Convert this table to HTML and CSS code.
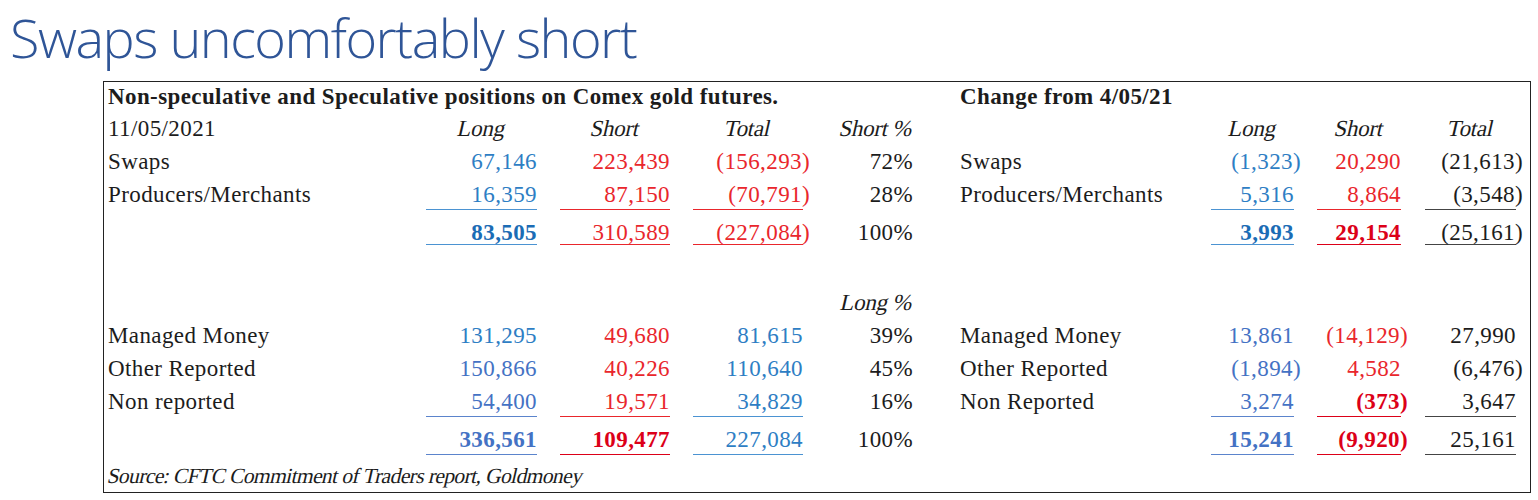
FILE: index.html
```html
<!DOCTYPE html>
<html lang="en">
<head>
<meta charset="utf-8">
<title>Swaps uncomfortably short</title>
<link rel="stylesheet" href="styles.css">
</head>
<body>
<h1 class="title">Swaps uncomfortably short</h1>
<div class="table">
  <div class="row row-title">
    <div class="cell bold span-left">Non-speculative and Speculative positions on Comex gold futures.</div>
    <div class="cell bold c-label2">Change from 4/05/21</div>
  </div>

  <div class="row">
    <div class="cell">11/05/2021</div>
    <div class="cell hdr"><span class="it">Long</span></div>
    <div class="cell hdr c-short"><span class="it">Short</span></div>
    <div class="cell hdr c-total"><span class="it">Total</span></div>
    <div class="cell num"><span class="it">Short %</span></div>
    <div class="cell c-label2"></div>
    <div class="cell hdr"><span class="it">Long</span></div>
    <div class="cell hdr c-short2"><span class="it">Short</span></div>
    <div class="cell hdr c-total2"><span class="it">Total</span></div>
  </div>

  <div class="row">
    <div class="cell">Swaps</div>
    <div class="cell num b1">67,146</div>
    <div class="cell num c-short r">223,439</div>
    <div class="cell num c-total r">(156,293<span class="p">)</span></div>
    <div class="cell num">72%</div>
    <div class="cell c-label2">Swaps</div>
    <div class="cell num b1">(1,323<span class="p">)</span></div>
    <div class="cell num c-short2 r">20,290</div>
    <div class="cell num c-total2">(21,613<span class="p">)</span></div>
  </div>

  <div class="row">
    <div class="cell">Producers/Merchants</div>
    <div class="cell num b1 u">16,359</div>
    <div class="cell num c-short r u">87,150</div>
    <div class="cell num c-total r u">(70,791<span class="p">)</span></div>
    <div class="cell num">28%</div>
    <div class="cell c-label2">Producers/Merchants</div>
    <div class="cell num b1 u">5,316</div>
    <div class="cell num c-short2 r u">8,864</div>
    <div class="cell num c-total2 k u">(3,548<span class="p">)</span></div>
  </div>

  <div class="row row-total">
    <div class="cell"></div>
    <div class="cell num bb bold ut">83,505</div>
    <div class="cell num c-short r ut">310,589</div>
    <div class="cell num c-total r ut">(227,084<span class="p">)</span></div>
    <div class="cell num">100%</div>
    <div class="cell c-label2"></div>
    <div class="cell num bb bold ut">3,993</div>
    <div class="cell num c-short2 rb bold ut">29,154</div>
    <div class="cell num c-total2 k ut">(25,161<span class="p">)</span></div>
  </div>

  <div class="row row-gap">
    <div class="cell"></div>
    <div class="cell"></div>
    <div class="cell c-short"></div>
    <div class="cell c-total"></div>
    <div class="cell num"><span class="it">Long %</span></div>
  </div>

  <div class="row">
    <div class="cell">Managed Money</div>
    <div class="cell num b1">131,295</div>
    <div class="cell num c-short r">49,680</div>
    <div class="cell num c-total b1">81,615</div>
    <div class="cell num">39%</div>
    <div class="cell c-label2">Managed Money</div>
    <div class="cell num b2">13,861</div>
    <div class="cell num c-short2 r">(14,129<span class="p">)</span></div>
    <div class="cell num c-total2">27,990</div>
  </div>

  <div class="row">
    <div class="cell">Other Reported</div>
    <div class="cell num b2">150,866</div>
    <div class="cell num c-short r">40,226</div>
    <div class="cell num c-total b1">110,640</div>
    <div class="cell num">45%</div>
    <div class="cell c-label2">Other Reported</div>
    <div class="cell num b2">(1,894<span class="p">)</span></div>
    <div class="cell num c-short2 r">4,582</div>
    <div class="cell num c-total2">(6,476<span class="p">)</span></div>
  </div>

  <div class="row">
    <div class="cell">Non reported</div>
    <div class="cell num b2 u">54,400</div>
    <div class="cell num c-short r u">19,571</div>
    <div class="cell num c-total b1 u">34,829</div>
    <div class="cell num">16%</div>
    <div class="cell c-label2">Non Reported</div>
    <div class="cell num b2 u">3,274</div>
    <div class="cell num c-short2 rb bold u">(373<span class="p">)</span></div>
    <div class="cell num c-total2 k u">3,647</div>
  </div>

  <div class="row row-total row-total2">
    <div class="cell"></div>
    <div class="cell num b2 bold ut">336,561</div>
    <div class="cell num c-short rb bold ut">109,477</div>
    <div class="cell num c-total b1 ut">227,084</div>
    <div class="cell num">100%</div>
    <div class="cell c-label2"></div>
    <div class="cell num b2 bold ut">15,241</div>
    <div class="cell num c-short2 rb bold ut">(9,920<span class="p">)</span></div>
    <div class="cell num c-total2 k ut">25,161</div>
  </div>

  <div class="row row-source">
    <div class="cell source"><span class="it it-source">Source: CFTC Commitment of Traders report, Goldmoney</span></div>
  </div>
</div>
</body>
</html>
```

FILE: styles.css
```css
html, body {
  margin: 0;
  padding: 0;
  background: #ffffff;
}

.title {
  margin: 0 0 7px 0;
  padding-left: 10px;
  font-family: "Open Sans", "Liberation Sans", sans-serif;
  font-weight: 300;
  font-size: 54px;
  line-height: 74px;
  letter-spacing: -1.5px;
  color: #2f5597;
  white-space: nowrap;
}

.table {
  box-sizing: border-box;
  margin-left: 103px;
  width: 1428px;
  border: 1px solid #222222;
  padding: 0 13px 0 4px;
  font-family: "Liberation Serif", "Times New Roman", serif;
  font-size: 23px;
  letter-spacing: 0.4px;
  color: #1c1c1c;
}

.row {
  display: grid;
  grid-template-columns: 318px 111px 133px 133px 110px 298px 83px 107px 115px;
  align-items: baseline;
  height: 33px;
  line-height: 33px;
  white-space: nowrap;
}

.row-title {
  height: 30px;
  line-height: 30px;
  letter-spacing: 0.4px;
}

.row-total {
  margin-top: 5px;
}

.row-gap {
  margin-top: 37px;
}

.row-source {
  margin-top: 3px;
}

.cell {
  min-width: 0;
}

.span-left {
  grid-column: 1 / 6;
}

.c-label2 {
  grid-column: 6;
  padding-left: 47px;
}

.c-short,
.c-total,
.c-short2 {
  margin-left: 23px;
}

.c-total2 {
  margin-left: 24px;
}

.bold {
  font-weight: bold;
}

.num {
  text-align: right;
}

.hdr {
  text-align: center;
}

/* slanted serif text (the serif family ships without an italic face here) */
.it {
  display: inline-block;
  font-style: normal;
  transform: skewX(-13deg);
  letter-spacing: -0.3px;
}

.it-source {
  transform-origin: left center;
  font-size: 21.5px;
  letter-spacing: -0.6px;
}

.p {
  margin-right: -7px;
}

.source {
  grid-column: 1 / -1;
}

.b1 { color: #2e7ec4; }
.b2 { color: #4472c4; }
.bb { color: #1b6cb5; }
.r  { color: #e9262c; }
.rb { color: #dc0018; }
.k  { color: #1c1c1c; }

.u {
  line-height: 28px;
  border-bottom: 1px solid currentColor;
}

.ut {
  line-height: 23px;
  border-bottom: 1px solid currentColor;
}

.row-total2 .ut {
  line-height: 28px;
}

.b1.u, .b1.ut { border-bottom-color: #4b93d2; }
.b2.u, .b2.ut { border-bottom-color: #5b84cc; }
.bb.ut { border-bottom-color: #4b93d2; }
.k.u, .k.ut { border-bottom-color: #444444; }
```
